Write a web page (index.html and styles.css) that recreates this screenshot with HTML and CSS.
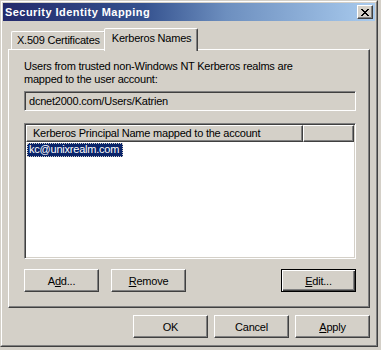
FILE: index.html
```html
<!DOCTYPE html>
<html lang="en">
<head>
    <meta charset="UTF-8">
    <title>Security Identity Mapping</title>
    <link rel="stylesheet" href="styles.css">
</head>
<body>

    <div class="window">
        <div class="window-inner">
            <div class="titlebar">
                <span class="title">Security Identity Mapping</span>
                <button class="close-btn" aria-label="Close">
                    <svg width="8" height="7" viewBox="0 0 8 7" shape-rendering="crispEdges">
                        <path d="M0 0h2v1h-2zM6 0h2v1h-2zM1 1h2v1h-2zM5 1h2v1h-2zM2 2h4v1h-4zM3 3h2v1h-2zM2 4h4v1h-4zM1 5h2v1h-2zM5 5h2v1h-2zM0 6h2v1h-2zM6 6h2v1h-2z" fill="#000"/>
                    </svg>
                </button>
            </div>

            <div class="dialog-body">
                <div class="tabs">
                    <div class="tab">X.509 Certificates</div>
                    <div class="tab active">Kerberos Names</div>
                </div>

                <div class="panel">
                    <p class="intro">Users from trusted non-Windows NT Kerberos realms are<br>mapped to the user account:</p>

                    <div class="readonly-box">dcnet2000.com/Users/Katrien</div>

                    <div class="listview">
                        <div class="list-header">
                            <div class="col-head first">Kerberos Principal Name mapped to the account</div>
                            <div class="col-head rest"></div>
                        </div>
                        <div class="list-rows">
                            <div class="list-item selected">kc@unixrealm.com</div>
                        </div>
                    </div>

                    <div class="panel-buttons">
                        <button class="btn">A<u>d</u>d...</button>
                        <button class="btn"><u>R</u>emove</button>
                        <span class="spacer"></span>
                        <button class="btn default"><u>E</u>dit...</button>
                    </div>
                </div>

                <div class="dialog-buttons">
                    <button class="btn">OK</button>
                    <button class="btn">Cancel</button>
                    <button class="btn"><u>A</u>pply</button>
                </div>
            </div>
        </div>
    </div>

</body>
</html>
```

FILE: styles.css
```css
body {
    margin: 0;
    background-color: #d4d0c8;
    font-family: "Liberation Sans", Arial, sans-serif;
    font-size: 11px;
    letter-spacing: -0.22px;
    color: #000;
}

/* Fensterrahmen im klassischen Stil */
.window {
    width: 378px;
    height: 347px;
    box-sizing: border-box;
    border: 1px solid;
    border-color: #d4d0c8 #404040 #404040 #d4d0c8;
}

.window-inner {
    height: 100%;
    box-sizing: border-box;
    border: 1px solid;
    border-color: #fff #808080 #808080 #fff;
    padding: 1px;
}

.titlebar {
    height: 18px;
    display: flex;
    align-items: center;
    justify-content: space-between;
    padding: 0 2px;
    background: linear-gradient(to right, #232a6c 0%, #35528f 38%, #6d8fbf 60%, #a9cbee 100%);
}

.title {
    color: #fff;
    font-weight: bold;
    font-size: 11px;
    letter-spacing: 0.45px;
}

.close-btn {
    width: 16px;
    height: 14px;
    padding: 0;
    display: flex;
    align-items: center;
    justify-content: center;
    background-color: #d4d0c8;
    border: 1px solid;
    border-color: #fff #404040 #404040 #fff;
    box-shadow: inset -1px -1px #808080;
}

.dialog-body {
    padding: 7px 5px 0 5px;
}

/* Registerkarten */
.tabs {
    display: flex;
    align-items: flex-end;
    height: 21px;
    padding-left: 3px;
}

.tab {
    height: 18px;
    box-sizing: border-box;
    padding: 2px 5px 0 5px;
    border: 1px solid;
    border-bottom: none;
    border-color: #fff #404040 transparent #fff;
    box-shadow: inset -1px 0 #808080;
    border-radius: 2px 2px 0 0;
    white-space: nowrap;
}

.tab.active {
    position: relative;
    z-index: 1;
    height: 23px;
    margin-bottom: -2px;
    margin-left: -2px;
    padding: 3px 6px 0 7px;
    background-color: #d4d0c8;
}

.panel {
    height: 259px;
    box-sizing: border-box;
    border: 1px solid;
    border-color: #fff #404040 #404040 #fff;
    box-shadow: inset -1px -1px #808080;
    padding: 10px 13px 0 15px;
    display: flex;
    flex-direction: column;
}

.intro {
    margin: 0;
    line-height: 13px;
}

.readonly-box {
    margin-top: 5px;
    height: 20px;
    box-sizing: border-box;
    border: 1px solid;
    border-color: #808080 #fff #fff #808080;
    box-shadow: inset 1px 1px #404040, inset -1px -1px #d4d0c8;
    padding: 3px 0 0 4px;
}

/* Listenansicht */
.listview {
    margin-top: 12px;
    height: 136px;
    box-sizing: border-box;
    border: 1px solid;
    border-color: #808080 #fff #fff #808080;
    box-shadow: inset 1px 1px #404040, inset -1px -1px #d4d0c8;
    padding: 1px;
    display: flex;
    flex-direction: column;
}

.list-header {
    display: flex;
    height: 17px;
}

.col-head {
    box-sizing: border-box;
    background-color: #d4d0c8;
    border: 1px solid;
    border-color: #fff #404040 #404040 #fff;
    box-shadow: inset -1px -1px #808080;
    padding: 1px 0 0 6px;
    white-space: nowrap;
}

.col-head.first {
    width: 277px;
}

.col-head.rest {
    flex: 1;
}

.list-rows {
    flex: 1;
    background-color: #fff;
    padding: 1px 0 0 1px;
}

.list-item {
    display: inline-block;
    height: 14px;
    line-height: 13px;
    padding: 0 4px 0 2px;
    box-sizing: border-box;
}

.list-item.selected {
    background-color: #0a246a;
    color: #fff;
    outline: 1px dotted #d4d0c8;
    outline-offset: -1px;
}

/* Schaltflächen */
.btn {
    width: 75px;
    height: 23px;
    box-sizing: border-box;
    padding: 0;
    font-family: inherit;
    font-size: 11px;
    letter-spacing: inherit;
    color: #000;
    background-color: #d4d0c8;
    border: 1px solid;
    border-color: #fff #404040 #404040 #fff;
    box-shadow: inset -1px -1px #808080;
}

.btn.default {
    border: 1px solid #000;
    box-shadow: inset 1px 1px #fff, inset -1px -1px #404040, inset -2px -2px #808080;
}

.panel-buttons {
    display: flex;
    gap: 12px;
    margin-top: 10px;
}

.spacer {
    flex: 1;
}

.dialog-buttons {
    display: flex;
    justify-content: flex-end;
    gap: 6px;
    margin-top: 7px;
}
```
